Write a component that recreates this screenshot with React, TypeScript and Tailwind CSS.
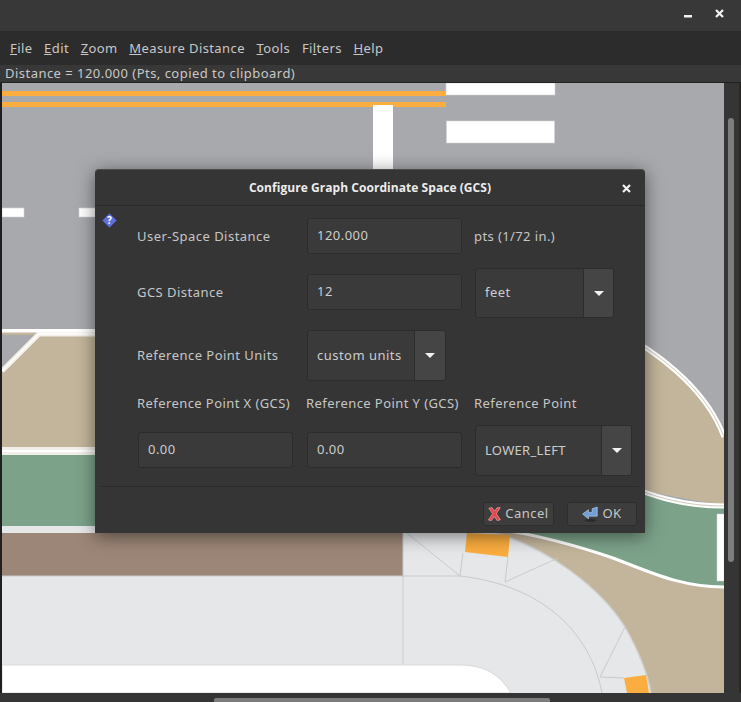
const menus = [
  { u: "F", rest: "ile" },
  { u: "E", rest: "dit" },
  { u: "Z", rest: "oom" },
  { u: "M", rest: "easure Distance" },
  { u: "T", rest: "ools" },
  { before: "Fi", u: "l", rest: "ters" },
  { u: "H", rest: "elp" },
];

function Field({ value, className }: { value: string; className: string }) {
  return (
    <div className={`flex h-[36px] items-center rounded-[3px] border border-[#2c2c2c] bg-[#3a3a3a] pl-[9px] text-[#cccccc] ${className}`}>
      {value}
    </div>
  );
}

function Combo({ value, className, textWidth }: { value: string; className: string; textWidth: string }) {
  return (
    <div className={`flex items-stretch overflow-hidden rounded-[3px] border border-[#2c2c2c] bg-[#3a3a3a] text-[#cccccc] ${className}`}>
      <div className={`flex items-center border-r border-[#2c2c2c] pl-[9px] ${textWidth}`}>{value}</div>
      <div className="flex flex-1 items-center justify-center bg-[#454545]">
        <svg width="10" height="5" viewBox="0 0 10 5">
          <path d="M0 0h10L5 5z" fill="#f2f2f2" />
        </svg>
      </div>
    </div>
  );
}

function CanvasDrawing() {
  return (
    <svg className="block h-[610px] w-[722px]" viewBox="2 83 722 610">
      <rect x="2" y="83" width="722" height="610" fill="#a8a9ad" />
      {/* runway stripes */}
      <rect x="2" y="91" width="444" height="5" fill="#fbad3f" />
      <rect x="2" y="102" width="444" height="5" fill="#fbad3f" />
      <rect x="446" y="83" width="109" height="12" fill="#fff" stroke="#d4d4d6" strokeWidth="0.6" />
      <rect x="446.5" y="121" width="108" height="22" fill="#fff" stroke="#d4d4d6" strokeWidth="0.6" />
      <rect x="373" y="105" width="20" height="70" fill="#fff" />
      <rect x="2" y="208" width="22" height="9" fill="#fff" stroke="#d4d4d6" strokeWidth="0.6" />
      <rect x="79" y="208" width="20" height="9" fill="#fff" stroke="#d4d4d6" strokeWidth="0.6" />
      {/* left side */}
      <path d="M2 329H120V455H2z" fill="#c2b59b" />
      <path d="M2 335H34L2 367z" fill="#a8a9ad" />
      <path d="M2 371L39 334H120" fill="none" stroke="#f1efe8" strokeWidth="5" />
      <path d="M2 371L39 334H120" fill="none" stroke="#fff" strokeWidth="1.5" />
      <rect x="2" y="329" width="118" height="3.5" fill="#fff" />
      <rect x="2" y="447" width="118" height="8" fill="#f1efe8" />
      <rect x="2" y="450" width="118" height="2" fill="#fff" />
      <rect x="2" y="455" width="118" height="71" fill="#7ca28a" />
      <rect x="2" y="526" width="118" height="7" fill="#e6e7e8" />
      {/* right side */}
      <path d="M620 333C650 348 705 385 724 437V506L640 490H620z" fill="#c2b59b" />
      <path d="M620 333C650 348 705 385 724 437" fill="none" stroke="#fff" strokeWidth="5" />
      <path d="M620 333C650 348 705 385 724 437" fill="none" stroke="#cfcabb" strokeWidth="1" />
      <path d="M620 483C650 495 680 506 724 506V587C680 587 650 572 613 558C580 547 540 535 500 530V480z" fill="#7ca28a" />
      <path d="M620 483C650 495 680 506 724 506" fill="none" stroke="#fff" strokeWidth="5" />
      <path d="M620 483C650 495 680 506 724 506" fill="none" stroke="#cfcabb" strokeWidth="1" />
      <rect x="717" y="514" width="7" height="67" fill="#fff" stroke="#d8d8d8" strokeWidth="0.5" />
      <path d="M500 530C540 535 580 547 613 558C650 572 680 587 724 587V693H400V530z" fill="#c2b59b" />
      <path d="M500 530C540 535 580 547 613 558C650 572 680 587 724 587" fill="none" stroke="#fff" strokeWidth="3" />
      {/* brown apron */}
      <rect x="2" y="533" width="401" height="43" fill="#9c8677" />
      {/* taxiway */}
      <path d="M2 576H403V531H490C550 548 602 590 625 627C638 650 648 675 651 693H2z" fill="#e6e7e8" />
      <path d="M490 531C550 548 602 590 625 627C638 650 648 675 651 693" fill="none" stroke="#cfd0d2" strokeWidth="1.5" />
      <path d="M2 576H460C540 585 590 630 602 693M403 531V664M407 533L460 576M463 553L460 576M508 557L505 582L558 558M625 627L600 677L624 678" fill="none" stroke="#c9cacc" strokeWidth="1" />
      <path d="M467 533L510 535L508 557L465 552z" fill="#fbad3f" />
      <path d="M624 678L646 675L649 693H627z" fill="#fbad3f" />
      <path d="M2 665H460C485 665 500 675 511 693H2z" fill="#fff" stroke="#d8d9da" strokeWidth="1" />
    </svg>
  );
}

export default function App() {
  return (
    <div className="relative flex h-[702px] w-[741px] flex-col overflow-hidden bg-[#383838] text-[13px] font-['Noto_Sans',sans-serif] tracking-[0.47px]">
      {/* window title bar */}
      <div className="flex h-[32px] items-start justify-end gap-[23px] border-b border-[#2c2c2c] bg-[#383838] pr-[17px] pt-[9px]">
        <svg width="8" height="10" viewBox="0 0 8 10" className="mt-[1px]">
          <rect x="0" y="5" width="8" height="2.5" fill="#f2f2f2" />
        </svg>
        <svg width="9" height="9" viewBox="0 0 9 9">
          <path d="M1 1l7 7M8 1L1 8" stroke="#f2f2f2" strokeWidth="2.2" />
        </svg>
      </div>

      {/* menu bar */}
      <div className="flex h-[33px] items-center gap-[11.7px] bg-[#2d2c2c] pl-[10px] tracking-[0.4px] text-[#c8c8c8]">
        {menus.map((m) => (
          <span key={m.u + m.rest}>
            {m.before}
            <u>{m.u}</u>
            {m.rest}
          </span>
        ))}
      </div>

      {/* status line */}
      <div className="flex h-[17px] items-center bg-[#383838] pl-[5px] text-[#c8c8c8]">
        Distance = 120.000 (Pts, copied to clipboard)
      </div>

      {/* canvas + scrollbars */}
      <div className="flex h-[611px] border-t border-[#222]">
        <div className="w-[2px] bg-[#1f1f1f]" />
        <CanvasDrawing />
        <div className="flex w-[15px] justify-center bg-[#353535] pr-[2px] pt-[35px]">
          <div className="h-[444px] w-[6px] rounded-full bg-[#7d7d7d]" />
        </div>
        <div className="w-[2px] bg-[#2a2522]" />
      </div>
      <div className="flex h-[9px] items-end bg-[#353535] pl-[214px]">
        <div className="h-[4px] w-[336px] rounded-t-[2px] bg-[#7d7d7d]" />
      </div>

      {/* dialog */}
      <div className="absolute left-[95px] top-[169px] h-[364px] w-[550px] rounded-t-[4px] border-t border-[#4c4c4c] bg-[#353535] text-[#c6c6c6] shadow-[0_3px_18px_rgba(0,0,0,0.5)]">
        <div className="flex h-[36px] items-center justify-center border-b border-[#2a2a2a] font-bold text-[12px] tracking-[0.05px] text-[#ececec] font-['Open_Sans',sans-serif]">
          Configure Graph Coordinate Space (GCS)
        </div>
        <svg className="absolute right-[14px] top-[14px]" width="9" height="9" viewBox="0 0 9 9">
          <path d="M1 1l7 7M8 1L1 8" stroke="#f2f2f2" strokeWidth="2.2" />
        </svg>
        <svg className="absolute left-[7px] top-[43px]" width="15" height="15" viewBox="0 0 15 15">
          <path d="M7.5 0.5L14.5 7.5L7.5 14.5L0.5 7.5z" fill="#5f6fdc" stroke="#4a58b8" strokeWidth="0.6" strokeLinejoin="round" />
          <text x="7.5" y="11" textAnchor="middle" fontSize="10" fontWeight="700" fill="#fff" fontFamily="Noto Sans">?</text>
        </svg>

        <div className="pl-[42px]">
          <div className="mt-[12px] flex h-[36px] items-center">
            <span className="w-[170px] pt-[2px]">User-Space Distance</span>
            <Field value="120.000" className="w-[155px]" />
            <span className="ml-[12px] pt-[2px] tracking-[0.4px]">pts (1/72 in.)</span>
          </div>
          <div className="mt-[14px] flex h-[50px] items-center">
            <span className="w-[170px]">GCS Distance</span>
            <Field value="12" className="mb-[2px] w-[155px]" />
            <Combo value="feet" className="ml-[13px] h-[50px] w-[139px]" textWidth="w-[108px]" />
          </div>
          <div className="mt-[12px] flex h-[51px] items-center">
            <span className="w-[170px]">Reference Point Units</span>
            <Combo value="custom units" className="h-[51px] w-[139px]" textWidth="w-[107px]" />
          </div>
          <div className="mt-[14px] flex h-[18px] items-center tracking-[0.42px]">
            <span className="w-[169px]">Reference Point X (GCS)</span>
            <span className="w-[168px]">Reference Point Y (GCS)</span>
            <span>Reference Point</span>
          </div>
          <div className="mt-[12px] flex h-[51px] items-center">
            <Field value="0.00" className="mb-[1px] ml-[1px] w-[155px]" />
            <Field value="0.00" className="mb-[1px] ml-[14px] w-[155px]" />
            <Combo value="LOWER_LEFT" className="ml-[13px] h-[51px] w-[157px] tracking-[0.3px]" textWidth="w-[126px]" />
          </div>
        </div>

        <div className="mx-[6px] mt-[10px] border-t border-[#2a2a2a]" />

        <div className="mt-[15px] flex justify-end gap-[13px] pr-[8px]">
          <div className="flex h-[24px] w-[71px] items-center justify-center gap-[4px] rounded-[3px] border border-[#2e2e2e] bg-[#3d3d3d]">
            <svg width="13" height="14" viewBox="0 0 13 14">
              <path d="M0.8 1.2L4 0.6l2.5 3.6L9 .8l3.2-.2-3.9 6.2 4.1 6-3.3.8-2.8-4.2-2.9 4.2-3-.6 4.2-6.2z" fill="#e2474c" stroke="#f5a0a2" strokeWidth="0.7" />
            </svg>
            Cancel
          </div>
          <div className="flex h-[24px] w-[70px] items-center justify-center gap-[4px] rounded-[3px] border border-[#2e2e2e] bg-[#3d3d3d]">
            <svg width="16" height="16" viewBox="0 0 15 15">
              <ellipse cx="8" cy="13.5" rx="5" ry="1.2" fill="#2a2a2a" />
              <path d="M9.5 2.5L14.3 1V9.5H6V12L0.5 7.5L6 3.5V6H9.5z" fill="#6f9fd8" stroke="#b5d0f0" strokeWidth="0.6" />
            </svg>
            OK
          </div>
        </div>
      </div>
    </div>
  );
}
